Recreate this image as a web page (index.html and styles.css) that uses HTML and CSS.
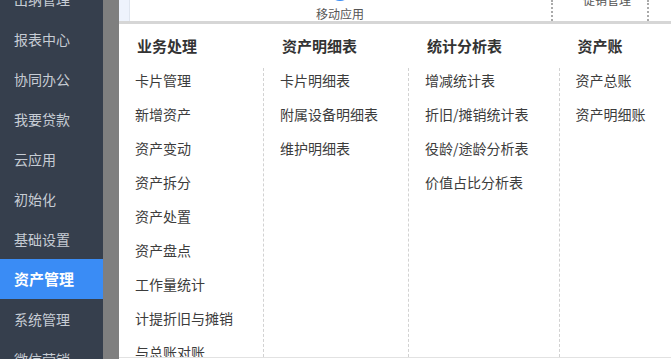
FILE: index.html
```html
<!DOCTYPE html>
<html lang="zh-CN">
<head>
    <meta charset="UTF-8">
    <meta name="viewport" content="width=device-width, initial-scale=1.0">
    <title>资产管理</title>
    <link rel="stylesheet" href="styles.css">
</head>
<body>
    <!-- Side Menu -->
    <nav class="sidebar">
        <ul class="side-menu">
            <li>出纳管理</li>
            <li>报表中心</li>
            <li>协同办公</li>
            <li>我要贷款</li>
            <li>云应用</li>
            <li>初始化</li>
            <li>基础设置</li>
            <li class="active">资产管理</li>
            <li>系统管理</li>
            <li>微信营销</li>
        </ul>
    </nav>

    <div class="mask-strip"></div>

    <main class="main">
        <!-- App shortcuts (scrolled) -->
        <div class="app-bar">
            <div class="app-tab"></div>
            <div class="app-tile">
                <svg class="app-icon" width="24" height="24" viewBox="0 0 24 24">
                    <circle cx="12" cy="12" r="10" fill="none" stroke="#3a8cf5" stroke-width="2"/>
                </svg>
                <span>移动应用</span>
            </div>
            <div class="app-tile dotted">
                <span>促销管理</span>
            </div>
        </div>

        <!-- Dropdown Panel -->
        <div class="panel">
            <div class="col">
                <div class="col-title">业务处理</div>
                <ul class="col-list">
                    <li>卡片管理</li>
                    <li>新增资产</li>
                    <li>资产变动</li>
                    <li>资产拆分</li>
                    <li>资产处置</li>
                    <li>资产盘点</li>
                    <li>工作量统计</li>
                    <li>计提折旧与摊销</li>
                    <li>与总账对账</li>
                </ul>
            </div>
            <div class="col">
                <div class="col-title">资产明细表</div>
                <ul class="col-list">
                    <li>卡片明细表</li>
                    <li>附属设备明细表</li>
                    <li>维护明细表</li>
                </ul>
            </div>
            <div class="col">
                <div class="col-title">统计分析表</div>
                <ul class="col-list">
                    <li>增减统计表</li>
                    <li>折旧/摊销统计表</li>
                    <li>役龄/途龄分析表</li>
                    <li>价值占比分析表</li>
                </ul>
            </div>
            <div class="col">
                <div class="col-title">资产账</div>
                <ul class="col-list">
                    <li>资产总账</li>
                    <li>资产明细账</li>
                </ul>
            </div>
        </div>
    </main>
</body>
</html>
```

FILE: styles.css
```css
:root {
    /* Colors */
    --side-bg-color: #363f4d;
    --side-text-color: #c6ccd4;
    --active-bg-color: #3a8cf5;
    --mask-color: #7f7f7f;
    --title-text-color: #333333;
    --item-text-color: #3c3c3c;
    --line-color: #d2d2d2;
}

body {
    margin: 0;
    padding: 0;
    width: 671px;
    height: 359px;
    overflow: hidden;
    display: flex;
    font-family: 'Noto Sans CJK SC', 'Microsoft YaHei', sans-serif;
    background-color: #ffffff;
}

ul {
    margin: 0;
    padding: 0;
    list-style: none;
}

/* Side Menu */
.sidebar {
    width: 103px;
    flex-shrink: 0;
    background-color: var(--side-bg-color);
    overflow: hidden;
}

.side-menu {
    margin-top: -21px;
}

.side-menu li {
    height: 40px;
    line-height: 40px;
    padding-left: 14px;
    font-size: 14px;
    color: var(--side-text-color);
    white-space: nowrap;
}

.side-menu li.active {
    background-color: var(--active-bg-color);
    color: #ffffff;
    font-size: 15px;
    font-weight: bold;
}

.mask-strip {
    width: 16px;
    flex-shrink: 0;
    background-color: var(--mask-color);
}

.main {
    flex: 1;
    display: flex;
    flex-direction: column;
    min-width: 0;
    height: 359px;
}

/* App shortcuts */
.app-bar {
    height: 21px;
    flex-shrink: 0;
    display: flex;
    overflow: hidden;
    border-bottom: 3px solid #d6d6d6;
}

.app-tab {
    width: 10px;
    background-color: #eef3fc;
    border-right: 1px solid #dfe5ee;
}

.app-tile {
    width: 98px;
    margin-left: 161px;
    display: flex;
    flex-direction: column;
    align-items: center;
    margin-top: -22px;
    font-size: 12px;
    line-height: 14px;
    color: #555555;
}

.app-icon {
    display: block;
    margin-bottom: 5px;
}

.app-tile.dotted {
    width: 94px;
    margin-left: 162px;
    margin-top: 0;
    border-left: 2px dotted #aaaaaa;
    border-right: 2px dotted #aaaaaa;
}

.app-tile.dotted span {
    margin-top: -7px;
    padding-left: 14px;
}

/* Dropdown Panel */
.panel {
    flex: 1;
    min-height: 0;
    overflow: hidden;
    display: flex;
    padding-left: 16px;
    border-bottom: 1px solid #e2e2e2;
    margin-bottom: 1px;
}

.col {
    display: flex;
    flex-direction: column;
}

.col-title {
    height: 44px;
    flex-shrink: 0;
    line-height: 44px;
    padding-left: 19px;
    font-size: 15px;
    font-weight: bold;
    color: var(--title-text-color);
    white-space: nowrap;
}

.col-list {
    flex: 1;
    padding: 0 30px 0 16px;
    border-left: 1px dashed var(--line-color);
}

.col-list li {
    line-height: 24px;
    margin-bottom: 10px;
    font-size: 14px;
    color: var(--item-text-color);
    white-space: nowrap;
}

.col:first-child .col-title {
    padding-left: 2px;
}

.col:first-child .col-list {
    border-left: none;
    padding-left: 0;
}
```
